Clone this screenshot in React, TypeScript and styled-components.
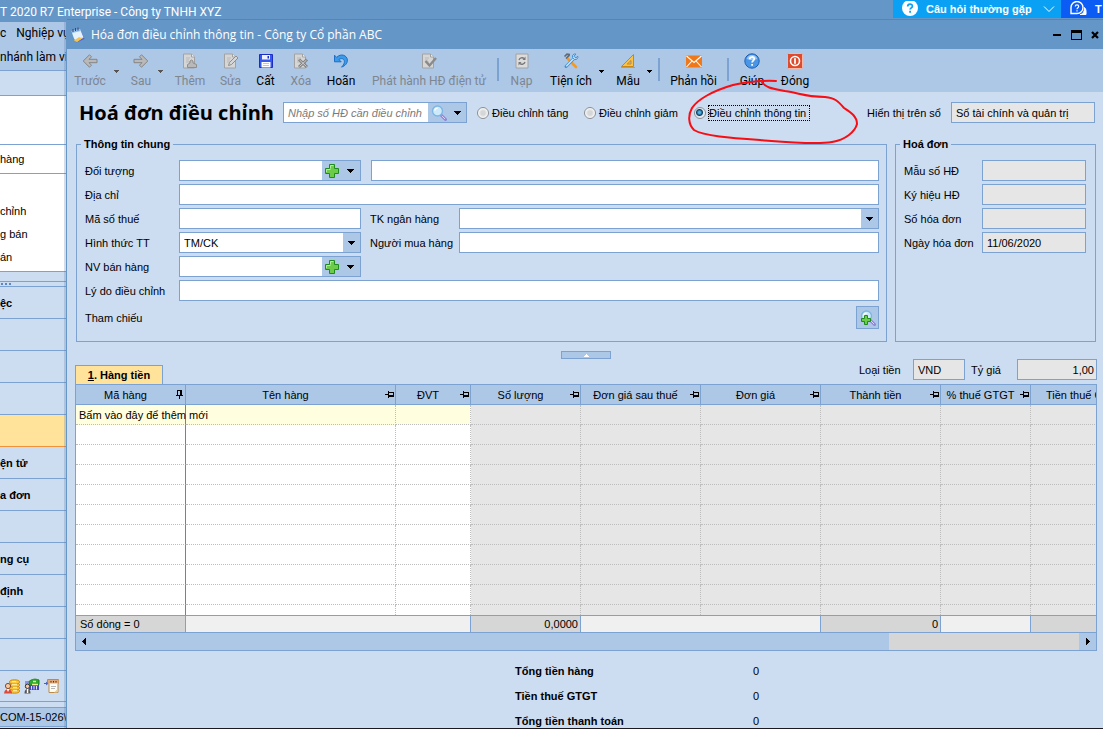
import React from 'react';
import styled, { createGlobalStyle, css } from 'styled-components';

const c = {
  bar: '#6596c8',
  tool: '#adc7e7',
  body: '#ccdcf1',
  line: '#7ba2d0',
  grey: '#e6e6e6',
  sum: '#d6d6d6',
};
const titleFont = "'Open Sans', 'Noto Sans', sans-serif";
const menuFont = "Roboto, 'Noto Sans', sans-serif";
const formFont = "'Liberation Sans', Arial, sans-serif";

const Global = createGlobalStyle`
  * { box-sizing: border-box; }
  body { margin: 0; background: ${c.body}; font: 11px/14px ${formFont}; color: #000; }
  button, input, select { font: inherit; color: inherit; margin: 0; padding: 0; border-radius: 0; }
  button { cursor: pointer; background: none; border: 0; }
`;

const Page = styled.div`
  min-height: 100vh;
  display: flex;
  flex-direction: column;
  overflow: hidden;
  position: relative;
  border-bottom: 1px solid #1c1820;
`;
const AppBar = styled.header`
  height: 19px;
  flex: none;
  display: flex;
  background: ${c.bar};
  color: #fff;
  font: 12px/24px ${menuFont};
  white-space: nowrap;
`;
const AppTitle = styled.span`
  flex: 1;
`;
const HelpButton = styled.button<{ $bg: string; $w: number }>`
  width: ${(p) => p.$w}px;
  height: 18px;
  padding: 0 6px 0 9px;
  display: flex;
  align-items: center;
  gap: 8px;
  overflow: hidden;
  background: ${(p) => p.$bg};
  color: #fff;
  font: bold 11px/16px ${formFont};
  white-space: nowrap;
  svg { flex: none; }
  svg:last-child { margin-left: auto; }
`;
const Columns = styled.div`
  flex: 1;
  display: flex;
  min-width: 0;
`;

/* ---- navigation column ---- */
const Nav = styled.nav`
  width: 66px;
  flex: none;
  position: relative;
  overflow: hidden;
  white-space: nowrap;
  border-top: 3px solid ${c.bar};
  display: flex;
  flex-direction: column;
  &::after {
    content: '';
    position: absolute;
    inset: 0 0 0 auto;
    width: 2px;
    background: rgba(90, 120, 160, 0.25);
  }
`;
const MenuLine = styled.div`
  height: 24px;
  background: ${c.tool};
  font: 12px/22px ${menuFont};
  display: flex;
  gap: 10px;
`;
const Strip = styled.div<{ $h: number; $bg?: string }>`
  height: ${(p) => p.$h}px;
  flex: none;
  background: ${(p) => p.$bg ?? c.body};
  border-bottom: 1px solid ${c.line};
`;
const Tree = styled.div`
  height: 98px;
  padding-top: 26px;
  background: #fff;
  border-bottom: 1px solid ${c.line};
  line-height: 23px;
`;
const TreeHead = styled(Strip)`
  line-height: 29px;
`;
const TreeItem = styled.a`
  display: block;
  color: #000;
  text-decoration: none;
`;
const Splitter = styled(Strip)`
  padding: 1px 0 0 1px;
`;
const NavItem = styled.a<{ $on?: boolean }>`
  display: block;
  height: 32px;
  flex: none;
  border-bottom: 1px solid ${(p) => (p.$on ? '#f0913c' : c.line)};
  background: ${(p) => (p.$on ? '#ffe39b' : c.body)};
  color: #000;
  font-weight: bold;
  line-height: 32px;
  text-decoration: none;
`;
const NavIcons = styled.div`
  height: 31px;
  flex: none;
  padding-left: 4px;
  display: flex;
  align-items: center;
  gap: 4px;
  border-bottom: 1px solid ${c.line};
`;
const Status = styled.div`
  height: 20px;
  margin-top: 5px;
  border: solid ${c.line};
  border-width: 1px 0;
  background: ${c.tool};
  line-height: 18px;
`;

/* ---- invoice window ---- */
const Dialog = styled.main`
  flex: 1;
  min-width: 0;
  border-left: 1px solid ${c.bar};
  background: ${c.body};
`;
const TitleBar = styled.div`
  height: 30px;
  padding: 0 1px 0 3px;
  display: flex;
  align-items: center;
  gap: 5px;
  background: ${c.bar};
  border-top: 1px solid #5584b6;
  color: #fff;
  font: 12px/16px ${titleFont};
`;
const WindowTitle = styled.span`
  flex: 1;
`;
const WindowButton = styled.button`
  width: 14px;
  height: 14px;
  display: grid;
  place-items: center;
`;
const Toolbar = styled.div`
  height: 43px;
  display: flex;
  gap: 6px;
  background: ${c.tool};
`;
const Split = styled.div`
  display: flex;
`;
const ToolButton = styled.button<{ $w: number }>`
  width: ${(p) => p.$w}px;
  height: 43px;
  padding-top: 4px;
  display: flex;
  flex-direction: column;
  align-items: center;
  gap: 4px;
  font: 12px/16px ${menuFont};
  white-space: nowrap;
  &:disabled { color: #7e8690; }
`;
const Drop = styled.button`
  width: 6px;
  padding-top: 20px;
  display: flex;
  justify-content: center;
  &:disabled { color: #555; }
`;
const Divider = styled.i`
  width: 2px;
  height: 23px;
  margin: 9px 0 0;
  background: ${c.line};
`;

const Content = styled.div`
  padding: 0 6px 0 8px;
`;
const HeadRow = styled.div`
  height: 44px;
  padding: 0 2px 3px 4px;
  display: flex;
  align-items: center;
  white-space: nowrap;
`;
const Heading = styled.h1`
  width: 204px;
  flex: none;
  margin: 0;
  font: bold 20px/28px ${titleFont};
`;
const RadioLabel = styled.label<{ $w: number }>`
  width: ${(p) => p.$w}px;
  display: flex;
  align-items: center;
  gap: 2px;
`;
const RadioText = styled.span<{ $focus?: boolean }>`
  padding: 0 3px 0 0;
  border: 1px ${(p) => (p.$focus ? 'dotted #000' : 'solid transparent')};
`;
const Radio = styled.input`
  appearance: none;
  width: 12px;
  height: 12px;
  flex: none;
  border: 1px solid #8b8f95;
  border-radius: 50%;
  background: radial-gradient(#d4d6d8 30%, #fff 75%);
  &:checked {
    background: radial-gradient(circle at 45% 45%, #4fb4e0 0 1px, #0f3f66 3px, #dfe6ec 4px, #fff);
  }
`;
const RadioRow = styled.div`
  flex: 1;
  display: flex;
  padding-left: 10px;
`;
const box = css`
  height: 21px;
  min-width: 0;
  border: 1px solid ${c.line};
  background: #fff;
`;
const TextBox = styled.input<{ $w?: number; $right?: boolean }>`
  ${box}
  ${(p) => (p.$w ? css`width: ${p.$w}px; flex: none;` : css`flex: 1;`)}
  padding: 0 2px 0 4px;
  text-align: ${(p) => (p.$right ? 'right' : 'left')};
  &:read-only { background: ${c.grey}; }
`;
const Combo = styled.div<{ $w?: number }>`
  ${box}
  ${(p) => (p.$w ? css`width: ${p.$w}px; flex: none;` : css`flex: 1;`)}
  display: flex;
  position: relative;
  input, select {
    flex: 1;
    min-width: 0;
    border: 0;
    padding: 0 4px;
    background: #fff;
    appearance: none;
    outline: 0;
  }
  input::placeholder { color: #7a7a7a; opacity: 1; font-style: italic; }
`;
const ComboButton = styled.button<{ $w: number }>`
  width: ${(p) => p.$w}px;
  flex: none;
  display: grid;
  place-items: center;
  background: ${c.tool};
`;

const Groups = styled.div`
  display: flex;
  gap: 8px;
  margin: 0 1px;
`;
const Group = styled.fieldset<{ $w?: number }>`
  ${(p) => (p.$w ? css`width: ${p.$w}px; flex: none;` : css`flex: 1;`)}
  min-width: 0;
  margin: 0;
  padding: 8px ${(p) => (p.$w ? 9 : 7)}px 12px 8px;
  border: 1px solid ${c.line};
`;
const Legend = styled.legend`
  margin-left: -4px;
  padding: 0 3px;
  font-weight: bold;
  line-height: 16px;
`;
const Rows = styled.div`
  display: flex;
  flex-direction: column;
  gap: 3px;
`;
const Row = styled.div`
  display: flex;
  align-items: center;
  white-space: nowrap;
`;
const Label = styled.label<{ $w: number }>`
  width: ${(p) => p.$w}px;
  flex: none;
`;
const Gap = styled.span<{ $w?: number }>`
  width: ${(p) => p.$w ?? 10}px;
  flex: none;
`;
const RefRow = styled(Row)`
  margin-top: 2px;
  justify-content: space-between;
`;
const LookupButton = styled.button`
  width: 23px;
  height: 23px;
  display: grid;
  place-items: center;
  border: 1px solid ${c.line};
  background: ${c.tool};
`;
const Collapse = styled.button`
  display: grid;
  place-items: center;
  width: 50px;
  height: 8px;
  margin: 9px auto 0;
  border: 1px solid ${c.line};
  background: ${c.tool};
`;
const TabRow = styled.div`
  height: 25px;
  display: flex;
  align-items: flex-start;
`;
const Tab = styled.button`
  width: 88px;
  height: 19px;
  align-self: flex-end;
  border: 1px solid ${c.line};
  border-bottom: 0;
  background: #ffe39b;
  font-weight: bold;
`;
const Currency = styled.div`
  margin-left: auto;
  display: flex;
  align-items: center;
`;

const GridBox = styled.div`
  border: 1px solid ${c.line};
  overflow: hidden;
`;
const Table = styled.table`
  width: 1075px;
  table-layout: fixed;
  border-collapse: separate;
  border-spacing: 0;
  white-space: nowrap;
`;
const Th = styled.th`
  height: 20px;
  padding: 0;
  border: solid ${c.line};
  border-width: 0 1px 1px 0;
  background: ${c.tool};
  font-weight: normal;
`;
const ThInner = styled.div`
  display: flex;
  align-items: center;
  padding-right: 1px;
  span { flex: 1; text-align: center; }
`;
const Td = styled.td<{ $bg: string; $solid?: boolean; $short?: boolean }>`
  height: ${(p) => (p.$short ? 10 : 20)}px;
  padding: 0 0 0 3px;
  background: ${(p) => p.$bg};
  border-right: 1px ${(p) => (p.$solid ? 'solid #808080' : 'dotted #bdbdbd')};
  border-bottom: ${(p) => (p.$short ? '0' : '1px dotted #bdbdbd')};
  line-height: 14px;
`;
const Tf = styled.td<{ $fill?: boolean; $num?: boolean }>`
  height: 17px;
  padding: 0 2px 0 4px;
  border: solid ${c.line};
  border-width: 1px 1px 0 0;
  background: ${(p) => (p.$fill ? c.sum : '#f0f0f0')};
  text-align: ${(p) => (p.$num ? 'right' : 'left')};
`;
const Scroll = styled.div`
  height: 18px;
  display: flex;
  border-top: 1px solid ${c.line};
  background: ${c.tool};
`;
const ScrollButton = styled.button`
  width: 17px;
  display: grid;
  place-items: center;
`;
const Track = styled.div`
  flex: 1;
  display: flex;
  justify-content: flex-end;
`;
const Thumb = styled.div`
  width: 190px;
  background: ${c.sum};
`;
const Totals = styled.dl`
  display: grid;
  grid-template-columns: 238px 40px;
  gap: 11px 0;
  margin: 0;
  padding: 13px 0 0 440px;
  white-space: nowrap;
  dt { font-weight: bold; }
  dd { margin: 0; }
`;
const Mark = styled.svg`
  position: absolute;
  left: 684px;
  top: 76px;
  pointer-events: none;
`;

/* ---- icons ---- */
const Tri = ({ d = 'down', fill = 'currentColor' }: { d?: string; fill?: string }) => {
  const p: Record<string, string> = {
    down: 'M0 1h7L3.5 5z',
    small: 'M1 1h5L3.5 4z',
    up: 'M1 4h5L3.5 1z',
    left: 'M5 0v7L1 3.5z',
    right: 'M2 0v7l4-3.5z',
  };
  const h = d === 'left' || d === 'right' ? 7 : 5;
  return (
    <svg width="7" height={h} viewBox={`0 0 7 ${h}`} shapeRendering="crispEdges" style={{ flex: 'none' }}>
      <path d={p[d]} fill={fill} />
    </svg>
  );
};
const Svg = ({ children, s = 16 }: { children: React.ReactNode; s?: number }) => (
  <svg width={s} height={s} viewBox="0 0 16 16" fill="none">{children}</svg>
);
const Arrow = ({ flip }: { flip?: boolean }) => (
  <Svg>
    <path
      transform={flip ? 'matrix(-1 0 0 1 16 0)' : undefined}
      d="M7.5 1.8 1.2 8l6.3 6.2 2-2L7 9.700h8V6.300H7l2.500-2.500z"
      fill="#b9b9b9" stroke="#858585"
    />
  </Svg>
);
const Sheet = ({ children }: { children?: React.ReactNode }) => (
  <Svg>
    <path d="M1.500 1h8l3 3v11h-11z" fill="#d6d6d6" stroke="#a2a2a2" />
    <path d="M9.500 1v3h3" fill="#f2f2f2" stroke="#a2a2a2" />
    <path d="M4 5h4M4 7h3M4 9h4" stroke="#b9b9b9" />
    {children}
  </Svg>
);
const Plus = () => (
  <Svg>
    <path d="M5.500 1.500h5v4h4v5h-4v4h-5v-4h-4v-5h4z" fill="#6ccb48" stroke="#1f8a1f" />
    <path d="M6.500 5.500v-3h3M2.500 9V6.500h4" stroke="#b4eb9c" />
  </Svg>
);
const Glass = ({ plus }: { plus?: boolean }) => (
  <Svg>
    <path d="m10 10 4.500 4.500" stroke="#8f86d8" strokeWidth="3" strokeLinecap="round" />
    <path d="m10.800 10.800 3.300 3.300" stroke="#d8d2fa" />
    <circle cx="6.500" cy="6" r="5" fill="#cdeafb" stroke="#7db6e3" strokeWidth="1.400" />
    <path d="M3.600 5.500c.4-1.600 1.600-2.300 3-2.400" stroke="#fff" strokeWidth="1.400" />
    {plus && <path d="M4.500 5.500h3v3h3v3h-3v3h-3v-3h-3v-3h3z" fill="#6ccb48" stroke="#1f8a1f" />}
  </Svg>
);
const Pin = ({ up }: { up?: boolean }) => (
  <svg width="9" height="9" viewBox="0 0 9 9" fill="none" stroke="#000" shapeRendering="crispEdges">
    {up ? (
      <path d="M2.500 5V.5h4V5M5.500 1v4M1 5.500h7M4.500 6v3" />
    ) : (
      <path d="M0 4.500h3M3.500 1v7M4 2.500h4.500v4H4M4 5.500h4" />
    )}
  </svg>
);
const icons = {
  add: (
    <Sheet>
      <path d="M5.500 14.500v-3l2.500-1.500V8l1.500-1 1.500 1v2l3.500 1.500v3z" fill="#b9b9b9" stroke="#8e8e8e" />
    </Sheet>
  ),
  edit: (
    <Sheet>
      <path d="m5.500 12.500 1-3L13 3l2 2-6.500 6.500z" fill="#d6d6d6" stroke="#8e8e8e" />
    </Sheet>
  ),
  save: (
    <Svg>
      <path d="M1.500 1.500h13v13h-13z" fill="#3558ee" stroke="#1a2ec4" />
      <path d="M4 2h8v4.500H4z" fill="#eef2ff" />
      <path d="M9.500 3h1.500v2.500H9.500z" fill="#1a2ec4" />
      <path d="M3.500 9h9v5.500h-9z" fill="#fff" />
      <path d="M5 10.500h6M5 12.500h6" stroke="#b9c3ee" />
    </Svg>
  ),
  remove: (
    <Sheet>
      <path d="m6 6.500 8 7.500M14 6.500 6 14" stroke="#828282" strokeWidth="3" />
      <path d="m6.500 7 7 6.500M13.500 7l-7 6.500" stroke="#cfcfcf" />
    </Sheet>
  ),
  undo: (
    <Svg>
      <path
        d="M1.500 2.200v6.600h6.700L5.900 6.500C9 4.300 12 6.400 11.300 9.600c-.3 1.900-1.400 3.200-2.800 4.500 4-1.300 6-4.100 5.900-7C14.200 2.300 7.800-.1 3.700 4.400z"
        fill="#3c9be8" stroke="#1c6fc4"
      />
    </Svg>
  ),
  issue: (
    <Sheet>
      <path d="m4.500 8 4 4.500L15 5" stroke="#8a8a8a" strokeWidth="2.400" />
    </Sheet>
  ),
  reload: (
    <Svg>
      <path d="M2 1h12v14H2z" fill="#dcdcdc" stroke="#a2a2a2" />
      <path d="M5 7c.5-2 3.500-3 5-1.500M11 9c-.5 2-3.500 3-5 1.500" stroke="#777" strokeWidth="1.300" />
      <path d="M11.500 3.500v3.500H8.500zM4.500 12.500V9h3z" fill="#777" />
    </Svg>
  ),
  tools: (
    <Svg>
      <path d="M4.500 5.500 13 14" stroke="#f09a2c" strokeWidth="2.600" strokeLinecap="round" />
      <path d="M1.500 3.500 4 1.200l3 .3M3 5.500l3.500-3.300" stroke="#5f6a77" strokeWidth="1.600" />
      <path d="m3 13.500 8.500-8.500" stroke="#3f8fd6" strokeWidth="3" strokeLinecap="round" />
      <path d="m3.200 13.200 7.600-7.600" stroke="#cfe7fb" strokeWidth="1.400" />
      <path d="M14.800 3.300 12.700 5 11 3.300 12.800 1C10.500.5 9 2.300 9.600 4.500l2 2c2 .4 3.800-1.200 3.200-3.200z" fill="#cfe7fb" stroke="#3f8fd6" />
    </Svg>
  ),
  ruler: (
    <Svg>
      <path d="M13.500 1.500v12h-12z" fill="#f8c24a" stroke="#c98716" />
      <path d="M11 7.500V11H7.300z" fill="#adc7e7" stroke="#c98716" />
      <path d="M1 14.500h14" stroke="#d89a28" />
    </Svg>
  ),
  mail: (
    <Svg>
      <path d="M0 2.500h16v12H0z" fill="#f07818" />
      <path d="m.5 3 7.500 6.500L15.500 3M.5 14 6 8M15.500 14 10 8" stroke="#fff" strokeWidth="1.100" />
    </Svg>
  ),
  help: (
    <Svg>
      <circle cx="8" cy="8" r="7.200" fill="#4a96e6" stroke="#1d5fb4" />
      <path d="M2.800 6a5.400 5.400 0 0 1 10.400 0c-3 1.500-7 1.500-10.400 0z" fill="#9cc8f6" />
      <path d="M5.700 6.300C5.700 3.200 10.400 3.300 10.300 6c0 1.500-2.200 1.700-2.200 3.500M8.100 11v1.700" stroke="#fff" strokeWidth="1.700" />
    </Svg>
  ),
  close: (
    <Svg>
      <rect x=".5" y=".5" width="15" height="15" rx="1" fill="#e04a2c" stroke="#f3b8a8" />
      <circle cx="8" cy="8" r="4.500" stroke="#fff" strokeWidth="1.600" />
      <path d="M8 5.300v5.400" stroke="#fff" strokeWidth="1.800" />
    </Svg>
  ),
};
const Notebook = () => (
  <Svg>
    <path d="M1.500 4 10 2l4.500 10-8 3.500z" fill="#5b5fd0" />
    <path d="M1.500 4 10 2l3.500 8.500-6.500 4C4 13.500 3 8.500 1.500 4z" fill="#e4f3ff" />
    <path d="M4 13.500c1.500-2 3.500-1.500 5-3.500 1.500 1 3 .5 4.500.5l-6.500 4.500z" fill="#f5c34c" />
    <path d="M1.500 4 10 2l.8 2-8.500 2z" fill="#8bbdf0" />
    <path d="M3 5V2M5.500 4V1M8 3.500v-3" stroke="#3c4568" />
  </Svg>
);
const Coins = () => (
  <Svg>
    {[13, 10, 7, 4].map((y) => (
      <ellipse key={y} cx="10.500" cy={y} rx="5" ry="2.200" fill="#fbc83c" stroke="#c98a14" />
    ))}
    <path d="M8 3.600h4M8 6.600h5M9 9.600h4M9 12.600h4" stroke="#fff0a8" />
    <circle cx="4" cy="8" r="2.600" fill="#f4c9a4" stroke="#8a4a2a" />
    <path d="M0 15.500c.3-3 2-4.500 4-4.500s4 1.500 4 4.500z" fill="#dc4a3c" />
    <path d="m2.500 11 1.500 3 1.500-3z" fill="#fff" />
  </Svg>
);
const Bank = () => (
  <Svg>
    <path d="M5 7h10v5H5z" fill="#4448b8" />
    <path d="M7.500 8v3.500M10 8v3.500M12.500 8v3.500" stroke="#dfe2ff" />
    <path d="M1 3h5v7H1z" fill="#8f92ea" />
    <path d="M5 3.500c3-2.500 6-3 10-1.500v4.500c-3-1-6 0-9 1z" fill="#2eaa2c" stroke="#1c7e22" />
    <path d="M9 3.500h3M8 6.500h6" stroke="#ecf08a" strokeWidth="1.400" />
    <circle cx="3.500" cy="8.300" r="2.200" fill="#f4c9a4" stroke="#333" />
    <path d="M.5 15.500c0-3 1-4.500 3-4.500s3 1.500 3 4.500z" fill="#555" />
    <path d="M2.800 11h1.500v4H2.800z" fill="#fff" />
  </Svg>
);
const Note = () => (
  <Svg>
    <path d="M3.500 1.500h11v4h-.5v9H5v-9l-1.500-.8z" fill="#fffdf2" stroke="#b98a48" />
    <path d="M4 2h10.500v3.500H4z" fill="#e0a878" />
    <path d="M6.500 3.800h1M9 3.800h1M11.500 3.800h1" stroke="#5a2a14" strokeWidth="1.600" />
    <path d="M7 8.500h5M7 10.500h4" stroke="#b7b7b7" />
    <path d="M10 14.500 13.500 11v3.500z" fill="#e6cc98" />
    <path d="M0 5.500h3M2 4l2 1.500L2 7" stroke="#4a5fc0" />
  </Svg>
);

const tools: { t: string; w: number; icon: React.ReactNode; off?: boolean; drop?: boolean; sep?: boolean }[] = [
  { t: 'Trước', w: 46, icon: <Arrow />, off: true, drop: true },
  { t: 'Sau', w: 32, icon: <Arrow flip />, off: true, drop: true },
  { t: 'Thêm', w: 42, icon: icons.add, off: true },
  { t: 'Sửa', w: 27, icon: icons.edit, off: true },
  { t: 'Cất', w: 31, icon: icons.save },
  { t: 'Xóa', w: 28, icon: icons.remove, off: true },
  { t: 'Hoãn', w: 40, icon: icons.undo },
  { t: 'Phát hành HĐ điện tử', w: 124, icon: icons.issue, off: true, sep: true },
  { t: 'Nạp', w: 33, icon: icons.reload, off: true },
  { t: 'Tiện ích', w: 54, icon: icons.tools, drop: true },
  { t: 'Mẫu', w: 36, icon: icons.ruler, drop: true, sep: true },
  { t: 'Phản hồi', w: 55, icon: icons.mail, sep: true },
  { t: 'Giúp', w: 34, icon: icons.help },
  { t: 'Đóng', w: 40, icon: icons.close },
];
const navItems = ['ệc', '', '', '', '', 'ện tử', 'a đơn', '', 'ng cụ', 'định', '', ''];
const columns: [string, number][] = [
  ['Mã hàng', 110],
  ['Tên hàng', 210],
  ['ĐVT', 75],
  ['Số lượng', 110],
  ['Đơn giá sau thuế', 120],
  ['Đơn giá', 120],
  ['Thành tiền', 120],
  ['% thuế GTGT', 90],
  ['Tiền thuế GTGT', 120],
];
const adjustments: [string, number][] = [
  ['Điều chỉnh tăng', 107],
  ['Điều chỉnh giảm', 110],
  ['Điều chỉnh thông tin', 130],
];

const PickCombo = ({ id }: { id: string }) => (
  <Combo $w={182}>
    <input id={id} />
    <ComboButton $w={19} type="button" aria-label="Thêm"><Plus /></ComboButton>
    <ComboButton $w={19} type="button" aria-label="Chọn"><Tri /></ComboButton>
  </Combo>
);

export default function App() {
  return (
    <Page>
      <Global />
      <AppBar>
        <AppTitle>T 2020 R7 Enterprise - Công ty TNHH XYZ</AppTitle>
        <HelpButton $bg="#0aa1f5" $w={168}>
          <svg width="16" height="16" viewBox="0 0 16 16">
            <circle cx="8" cy="7" r="8" fill="#fff" />
            <path d="M5.700 5.500C5.700 2.300 10.500 2.400 10.400 5.200c0 1.600-2.300 1.700-2.300 3.400M8.100 9.800v1.900" stroke="#0aa1f5" strokeWidth="1.800" fill="none" />
          </svg>
          Câu hỏi thường gặp
          <svg width="12" height="8" viewBox="0 0 12 8"><path d="m1 1.500 5 5 5-5" fill="none" stroke="#fff" /></svg>
        </HelpButton>
        <HelpButton $bg="#0b5cf5" $w={42}>
          <svg width="17" height="16" viewBox="0 0 17 16" fill="none" stroke="#fff">
            <path d="M1 12V6.500a6 6 0 1 1 6 6H1z" strokeWidth="1.400" />
            <path d="M5.300 5.500c0-2.200 3.400-2.200 3.400 0 0 1.200-1.700 1.200-1.700 2.700M7 9.300v1.200" strokeWidth="1.200" />
            <path d="M14.500 6.500c1.500 1.500 1.700 3 1.500 7h-6c2.500 0 4.500-2.500 4.500-7z" fill="#fff" />
          </svg>
          <span>T</span>
        </HelpButton>
      </AppBar>

      <Columns>
        <Nav>
          <MenuLine><span>c</span><span>Nghiệp vụ</span></MenuLine>
          <MenuLine>nhánh làm việc</MenuLine>
          <Strip $h={1} />
          <Strip $h={25} />
          <Strip $h={49} $bg="#fff" />
          <TreeHead $h={29} $bg="#fff">hàng</TreeHead>
          <Tree>
            <TreeItem href="#chinh">chỉnh</TreeItem>
            <TreeItem href="#ban">g bán</TreeItem>
            <TreeItem href="#an">án</TreeItem>
          </Tree>
          <Strip $h={10} />
          <Splitter $h={5}>
            <svg width="12" height="3" style={{ display: 'block' }} shapeRendering="crispEdges">
              <path d="M0 1h2M4 1h2M8 1h2" stroke="#5b87c4" strokeWidth="2" />
            </svg>
          </Splitter>
          {navItems.map((t, i) => (
            <NavItem key={i} href="#nav" $on={i === 4}>{t}</NavItem>
          ))}
          <NavIcons><Coins /><Bank /><Note /></NavIcons>
          <Status>COM-15-026\</Status>
        </Nav>

        <Dialog>
          <TitleBar>
            <Notebook />
            <WindowTitle>Hóa đơn điều chỉnh thông tin - Công ty Cổ phần ABC</WindowTitle>
            <WindowButton aria-label="Thu nhỏ">
              <svg width="8" height="8"><path d="M0 3h8v2H0z" /></svg>
            </WindowButton>
            <WindowButton aria-label="Phóng to">
              <svg width="11" height="10" shapeRendering="crispEdges"><path d="M0 0h11v10H0zM1 3v6h9V3z" fillRule="evenodd" /></svg>
            </WindowButton>
            <WindowButton aria-label="Đóng cửa sổ">
              <svg width="8" height="8"><path d="m1 1 6 6M7 1 1 7" stroke="#000" strokeWidth="2.200" /></svg>
            </WindowButton>
          </TitleBar>

          <Toolbar>
            {tools.map((b) => (
              <React.Fragment key={b.t}>
                <Split>
                  <ToolButton $w={b.w} disabled={b.off}>{b.icon}{b.t}</ToolButton>
                  {b.drop && <Drop disabled={b.off} aria-label={b.t}><Tri d="small" /></Drop>}
                </Split>
                {b.sep && <Divider />}
              </React.Fragment>
            ))}
          </Toolbar>

          <Content>
            <HeadRow>
              <Heading>Hoá đơn điều chỉnh</Heading>
              <Combo $w={184}>
                <input placeholder="Nhập số HĐ cần điều chỉnh" aria-label="Số hóa đơn" />
                <ComboButton $w={21} aria-label="Tìm"><Glass /></ComboButton>
                <ComboButton $w={17} aria-label="Mở"><Tri /></ComboButton>
              </Combo>
              <RadioRow>
                {adjustments.map(([t, w], i) => (
                  <RadioLabel key={t} $w={w}>
                    <Radio type="radio" name="kind" defaultChecked={i === 2} />
                    <RadioText $focus={i === 2}>{t}</RadioText>
                  </RadioLabel>
                ))}
              </RadioRow>
              <Label $w={84} htmlFor="book">Hiển thị trên sổ</Label>
              <TextBox id="book" $w={144} readOnly defaultValue="Sổ tài chính và quản trị" />
            </HeadRow>

            <Groups>
              <Group>
                <Legend>Thông tin chung</Legend>
                <Rows>
                  <Row>
                    <Label $w={94} htmlFor="obj">Đối tượng</Label>
                    <PickCombo id="obj" />
                    <Gap />
                    <TextBox aria-label="Tên đối tượng" />
                  </Row>
                  <Row>
                    <Label $w={94} htmlFor="addr">Địa chỉ</Label>
                    <TextBox id="addr" />
                  </Row>
                  <Row>
                    <Label $w={94} htmlFor="tax">Mã số thuế</Label>
                    <TextBox id="tax" $w={182} />
                    <Gap $w={9} />
                    <Label $w={89} htmlFor="bank">TK ngân hàng</Label>
                    <Combo>
                      <input id="bank" />
                      <ComboButton $w={17} aria-label="Chọn"><Tri /></ComboButton>
                    </Combo>
                  </Row>
                  <Row>
                    <Label $w={94} htmlFor="pay">Hình thức TT</Label>
                    <Combo $w={182}>
                      <select id="pay"><option>TM/CK</option></select>
                      <ComboButton $w={17} aria-label="Chọn"><Tri /></ComboButton>
                    </Combo>
                    <Gap $w={9} />
                    <Label $w={89} htmlFor="buyer">Người mua hàng</Label>
                    <TextBox id="buyer" />
                  </Row>
                  <Row>
                    <Label $w={94} htmlFor="staff">NV bán hàng</Label>
                    <PickCombo id="staff" />
                  </Row>
                  <Row>
                    <Label $w={94} htmlFor="why">Lý do điều chỉnh</Label>
                    <TextBox id="why" />
                  </Row>
                  <RefRow>
                    <span>Tham chiếu</span>
                    <LookupButton aria-label="Tham chiếu"><Glass plus /></LookupButton>
                  </RefRow>
                </Rows>
              </Group>
              <Group $w={201}>
                <Legend>Hoá đơn</Legend>
                <Rows>
                  {[['Mẫu số HĐ', ''], ['Ký hiệu HĐ', ''], ['Số hóa đơn', ''], ['Ngày hóa đơn', '11/06/2020']].map(([t, v]) => (
                    <Row key={t}>
                      <Label $w={78} htmlFor={t}>{t}</Label>
                      <TextBox id={t} readOnly defaultValue={v} />
                    </Row>
                  ))}
                </Rows>
              </Group>
            </Groups>

            <Collapse aria-label="Thu gọn"><Tri d="up" fill="#fff" /></Collapse>
            <TabRow>
              <Tab><u>1</u>. Hàng tiền</Tab>
              <Currency>
                <Label $w={54} htmlFor="cur">Loại tiền</Label>
                <TextBox id="cur" $w={52} readOnly defaultValue="VND" />
                <Gap $w={6} />
                <Label $w={46} htmlFor="rate">Tỷ giá</Label>
                <TextBox id="rate" $w={80} $right readOnly defaultValue="1,00" />
              </Currency>
            </TabRow>

            <GridBox>
              <Table>
                <colgroup>{columns.map(([t, w]) => <col key={t} style={{ width: w }} />)}</colgroup>
                <thead>
                  <tr>
                    {columns.map(([t], i) => (
                      <Th key={t}><ThInner><span>{t}</span><Pin up={i === 0} /></ThInner></Th>
                    ))}
                  </tr>
                </thead>
                <tbody>
                  {Array.from({ length: 11 }, (_, r) => (
                    <tr key={r}>
                      {columns.map(([t], i) => (
                        <Td key={t} $solid={i === 0} $short={r === 10} $bg={i > 2 ? c.grey : r === 0 ? '#ffffdf' : '#fff'}>
                          {r === 0 && i === 0 ? 'Bấm vào đây để thêm mới' : null}
                        </Td>
                      ))}
                    </tr>
                  ))}
                </tbody>
                <tfoot>
                  <tr>
                    <Tf $fill>Số dòng = 0</Tf>
                    <Tf colSpan={2} />
                    <Tf $fill $num>0,0000</Tf>
                    <Tf colSpan={2} />
                    <Tf $fill $num>0</Tf>
                    <Tf />
                    <Tf $fill />
                  </tr>
                </tfoot>
              </Table>
              <Scroll>
                <ScrollButton aria-label="Cuộn trái"><Tri d="left" /></ScrollButton>
                <Track><Thumb /></Track>
                <ScrollButton aria-label="Cuộn phải"><Tri d="right" /></ScrollButton>
              </Scroll>
            </GridBox>

            <Totals>
              <dt>Tổng tiền hàng</dt><dd>0</dd>
              <dt>Tiền thuế GTGT</dt><dd>0</dd>
              <dt>Tổng tiền thanh toán</dt><dd>0</dd>
            </Totals>
          </Content>
        </Dialog>
      </Columns>

      <Mark width="176" height="72" viewBox="684 76 176 72" fill="none" stroke="#f80d12" strokeWidth="2" strokeLinecap="round">
        <path d="M776 81C765 80 745 82 733 85C712 91 697 100 692 108C688 115 688 124 694 130C704 136 730 138 760 140C785 142 815 145 832 142C845 140 855 132 857 124C857 116 850 112 844 108C838 101 835 98 825 97C805 97 800 93 785 91C775 89 765 88 762 82" />
      </Mark>
    </Page>
  );
}
